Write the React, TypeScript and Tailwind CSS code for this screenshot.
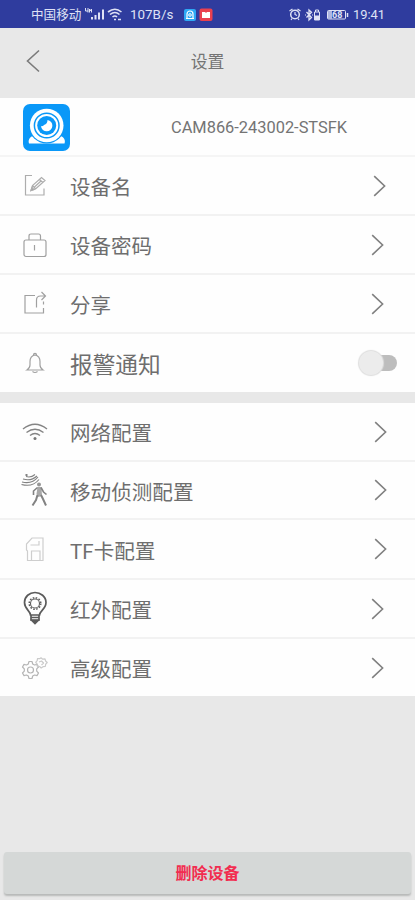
import type { ReactNode } from 'react';

function Chevron() {
  return (
    <svg width="13" height="22" viewBox="0 0 13 22" fill="none" stroke="#808080" strokeWidth="1.6">
      <path d="M1.2 1.2 11.6 11 1.2 20.8" />
    </svg>
  );
}

function StatusBar() {
  return (
    <header className="flex h-7 shrink-0 items-center bg-[#2f3c9e] pl-[31px] pt-[2px] text-[12.6px] leading-none text-[#dfe2f5]">
      <span className="w-[53px] whitespace-nowrap pt-px">中国移动</span>
      <svg className="-mt-[2px]" width="38" height="16" viewBox="0 0 38 16" fill="#dfe2f5">
        <path d="M1.5 2v3H4M4 2v4.500M5.500 6.500V3L6.500 5 7.500 3v3.500" fill="none" stroke="#dfe2f5" strokeWidth="1" />
        <path d="M7 11h2v2.500H7zM10.500 9h2v4.500h-2zM14 6.500h2v7h-2zM18 3.500h2v10h-2z" />
        <g fill="none" stroke="#dfe2f5" strokeWidth="1.600">
          <path d="M24 6Q31 .5 37.500 6M26 8.500Q31 4.500 35.500 8.500M28.500 11Q31 9 33 11" />
          <path d="M30 13.500h2M34 13.500h3" />
        </g>
      </svg>
      <span className="ml-[8px] w-[53px] whitespace-nowrap text-[13.400px]">107B/s</span>
      <svg className="-mt-px" width="30" height="14" viewBox="0 0 30 14">
        <rect x="1" y="1" width="12" height="12" rx="2" fill="#2ea8f5" />
        <path d="M4 10V6a3 3 0 0 1 6 0v4M3 10.500h8" fill="none" stroke="#fff" strokeWidth="1.200" />
        <circle cx="7" cy="7" r="1.300" fill="none" stroke="#fff" />
        <rect x="16.500" y="0.500" width="13" height="12.500" rx="2" fill="#e9404f" />
        <path d="M19 4h3l1 1 1-1h3v6h-8z" fill="#fff" />
      </svg>
      <svg className="ml-[75px]" width="62" height="16" viewBox="0 0 62 16" fill="none" stroke="#dfe2f5">
        <circle cx="7" cy="7.500" r="4.300" strokeWidth="1.500" />
        <path d="M1.500 4l3-2M12.500 4l-3-2M7 5v2.500l2 1M4 11.500l-1 1.500M10 11.500l1 1.500" strokeWidth="1.200" />
        <path d="M18.500 5l5 5.500L21 13V3l2.500 2.200-5 5.300" strokeWidth="1.300" />
        <path d="M17 8h1M24 8h1" />
        <path d="M27.500 5V3h3v2M26.500 5h5v8h-5z" />
        <path d="M26.500 9h5v3.500h-5z" fill="#dfe2f5" />
        <rect x="39.500" y="3.500" width="18" height="8.500" rx="1" />
        <path d="M40 4h4v8h-4z" fill="#aeb5e0" stroke="none" />
        <path d="M59.500 6v4" strokeWidth="1.500" />
        <text x="44" y="11" fontSize="9" fontWeight="700" stroke="none" fill="#dfe2f5">68</text>
      </svg>
      <span className="ml-[3px] pt-px text-[12.900px]">19:41</span>
    </header>
  );
}

function CameraLogo() {
  return (
    <svg className="ml-[23px] mt-px" width="47" height="47" viewBox="0 0 47 47">
      <rect width="47" height="47" rx="7" fill="#0a98f8" />
      <path d="M10 32C6 33 5 37 6 39.500h35.500c1-2.500 0-6.500-4-7.500z" fill="#fff" />
      <circle cx="23.700" cy="21.500" r="18" fill="#0a98f8" />
      <circle cx="23.700" cy="21.500" r="16.800" fill="#fff" />
      <circle cx="23.700" cy="21.500" r="12.300" fill="none" stroke="#0a98f8" strokeWidth="1.500" />
      <circle cx="23.700" cy="21.500" r="9.500" fill="#0a98f8" />
      <path d="M24.500 16a5.700 5.700 0 1 1-6.500 6.200q2.500 0 3-1.200 3.500-1 3.500-5z" fill="#fff" />
    </svg>
  );
}

const line = { fill: 'none', stroke: '#a0a0a0', strokeWidth: 1.2 } as const;

const icons: Record<string, ReactNode> = {
  edit: (
    <g {...line} stroke="#adadad" transform="translate(7 4.500)">
      <path d="M8 3H1.500v19.500h18.500V16" />
      <path d="M7 18l1.500-5L17.500 5l3.500 3-9.500 8.500zM8.500 13l3.200 3.500M15.500 7l3.500 3.300M10.500 14.500l7-6.500" />
      <path d="M7 18l1-3 2 2z" fill="#999" />
    </g>
  ),
  lock: (
    <g {...line} transform="translate(0 1.500)">
      <rect x="7" y="11.500" width="22" height="16.500" rx="2" />
      <path d="M12 11.500V7.500q0-2 2-2h7.500q2 0 2 2v4M17.500 16.500v5.500" />
    </g>
  ),
  share: (
    <g {...line} transform="translate(0 1)">
      <path d="M18 8.500H8v17.500h18.500V21M26.500 14.500v3M19.500 20.500V13q0-4 4-4h4M24.500 5l4 4-4 4" />
    </g>
  ),
  bell: (
    <g {...line} transform="translate(0 .5)">
      <path d="M10 24.500h16q-3-2-3-5V16q0-5.500-5-6.500-5 1-5 6.500v3.500q0 3-3 5zM16.500 9.500q0-1.700 1.500-1.700t1.500 1.700M15.500 26q2.500 2 5 0" />
    </g>
  ),
  wifi: (
    <g {...line} stroke="#858585" strokeWidth={1.400} transform="translate(.5 1.500)">
      <path d="M5.500 13.500Q17.500 4 29.500 13.500M9 17q8.500-6.500 17 0M12.500 20q5-4 10 0" />
      <circle cx="17.500" cy="23" r="1.500" fill="#777" stroke="none" />
    </g>
  ),
  motion: (
    <g {...line} stroke="#828282">
      <path d="M9 4.500q5 1.500 9-2M6 7q8 2.500 14-3M5 10q10 2.500 16-5M4.500 12.500q11 3 17.500-5" strokeWidth="1.100" />
      <path d="M9.500 2v2" strokeWidth="2" />
      <circle cx="22" cy="12.500" r="2" fill="#969696" stroke="none" />
      <path d="M20.500 15h4l.5 9-4 1-1.500-3z" fill="#a8a8a8" stroke="none" />
      <path d="M20.500 15.500l-4 3.500v4M24 15.500l2.500 4.500 3 2.500" strokeWidth="1.600" />
      <path d="M20.500 23l-1.500 5-3.500 5.500M24 23l2 4 3 6.500" strokeWidth="2" />
    </g>
  ),
  card: (
    <g {...line} stroke="#cecece" transform="translate(0 1)">
      <path d="M15 6h11v22.500H10.500V19l-1-1v-6zM13.500 13H22V9M14.500 28v-9H23v9" />
    </g>
  ),
  bulb: (
    <g {...line} stroke="#5b5b5b" strokeWidth={1.700}>
      <path d="M13.500 24c0-4-6-6-6-12.500C7.500 5.500 12.500 1.500 18 1.500S29 5.500 29 11.500c0 6.500-6.500 8.500-6.500 12.500zM14 24v5h8v-5M14 26.500h8" />
      <path d="M15 29.500h6l-3 3z" fill="#5b5b5b" />
      <circle cx="18" cy="12.500" r="4.500" strokeWidth="1.100" />
      <circle cx="18" cy="12.500" r="5.800" strokeWidth="1.500" strokeDasharray="1.600 1.437" />
    </g>
  ),
  gears: (
    <g {...line} stroke="#b5b5b5" strokeWidth={1.200} strokeLinejoin="round">
      <path d="M12 11.500h3l.7 2.500 1.800 1 2.500-.6 1.500 2.600-1.800 1.800v2.400l1.800 1.800-1.500 2.600-2.500-.6-1.800 1-.7 2.500h-3l-.7-2.500-1.800-1-2.500.6L5.500 23l1.800-1.800v-2.400L5.500 17 7 14.400l2.500.6 1.800-1z" />
      <circle cx="13.500" cy="20" r="3" />
      <path d="M24 7.800l1.700 1.400 2.300-.4.600 2.200 1.600 1.500-1.500 1.700-.4 2.300-2.300.2-1.800 1.300-1.600-1.500-2.400-.4-.2-2.200-1.300-1.600 1.500-1.600.3-2.200 2.200.2z" stroke="#cacaca" />
      <path d="M22 12l2.500-1 2 2-2 2" stroke="#cacaca" />
    </g>
  ),
};

interface RowProps {
  icon: string;
  label: string;
  height: string;
  end?: string;
  size?: string;
  last?: boolean;
  children?: ReactNode;
}

function Row({ icon, label, height, end = 'pr-[31px]', size = 'pt-[5px] text-[20.5px]', last = false, children }: RowProps) {
  return (
    <div className={`flex items-center ${height} ${end} ${last ? '' : 'border-b-2 border-[#f2f2f2]'}`}>
      <svg className="ml-[17px] shrink-0" width="36" height="36" viewBox="0 0 36 36">{icons[icon]}</svg>
      <span className={`ml-[17px] flex-1 whitespace-nowrap leading-none text-[#6e6e6e] ${size}`}>{label}</span>
      {children ?? <Chevron />}
    </div>
  );
}

export default function App() {
  return (
    <div className="flex h-[900px] w-[415px] flex-col overflow-hidden bg-[#e8e8e8] font-[Roboto,'Noto_Sans_CJK_SC',sans-serif]">
      <StatusBar />
      <div className="grid h-[70px] shrink-0 grid-cols-[60px_1fr_60px] items-center">
        <svg className="ml-[25px] mt-[-5px]" width="16" height="24" viewBox="0 0 16 24" fill="none" stroke="#7b7b7b" strokeWidth="1.600">
          <path d="M14 1.500 2.500 12 14 22.500" />
        </svg>
        <h1 className="pb-[2px] text-center text-[16.8px] leading-none text-[#747474]">设置</h1>
      </div>

      <section className="shrink-0 bg-[#fefefe]">
        <div className="flex h-[59px] items-center border-b-2 border-[#f5f5f5]">
          <CameraLogo />
          <span className="ml-[101px] pt-[4px] text-[16.400px] leading-none text-[#747474]">CAM866-243002-STSFK</span>
        </div>
        <Row icon="edit" label="设备名" height="h-[59px]" end="pr-[29px]" />
        <Row icon="lock" label="设备密码" height="h-[59px]" />
        <Row icon="share" label="分享" height="h-[59px]" />
        <Row icon="bell" label="报警通知" height="h-[58px]" end="pr-[18px]" size="pt-[6px] text-[22.7px]" last>
          <div className="flex h-6 w-[38px] items-center">
            <div className="z-10 size-6 shrink-0 rounded-full bg-[#ececec] shadow-[0_0_1px_1px_#dedede]" />
            <div className="-ml-2 h-4 w-[22px] rounded-r-full bg-[#bdbdbd]" />
          </div>
        </Row>
      </section>

      <section className="mt-[11px] shrink-0 bg-[#fefefe]">
        <Row icon="wifi" label="网络配置" height="h-[59px]" end="pr-[28px]" />
        <Row icon="motion" label="移动侦测配置" height="h-[58px]" end="pr-[28px]" size="pt-[7px] text-[20.6px]" />
        <Row icon="card" label="TF卡配置" height="h-[60px]" end="pr-[28px]" size="pt-[6px] text-[20.6px]" />
        <Row icon="bulb" label="红外配置" height="h-[59px]" />
        <Row icon="gears" label="高级配置" height="h-[57px]" last />
      </section>

      <button className="mx-[4px] mb-[6px] mt-auto flex h-[42px] items-center justify-center rounded-[3px] bg-[#d5d8d7] pt-[2px] text-[16px] font-bold leading-none text-[#f22d50] shadow-[0_2px_2px_#b7b9b8]">
        删除设备
      </button>
    </div>
  );
}
